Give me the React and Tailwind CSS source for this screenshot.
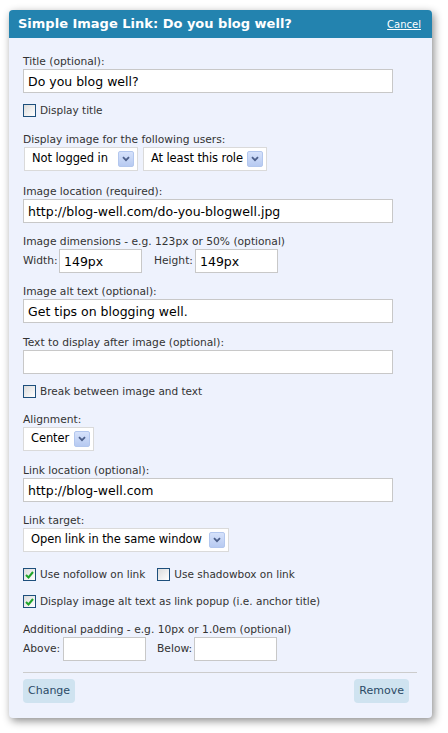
import React from 'react';

const font = { fontFamily: '"DejaVu Sans", Verdana, sans-serif' };

function Label({ children, className = '' }) {
  return <div className={`h-[14px] whitespace-nowrap text-[10.7px] leading-[14px] text-[#333] ${className}`}>{children}</div>;
}

function TextInput({ value = '', className = 'w-[370px]' }) {
  return (
    <input
      readOnly
      defaultValue={value}
      className={`block h-6 border border-[#c8c8c8] bg-white px-[4px] text-[12.5px] text-black outline-none ${className}`}
      style={font}
    />
  );
}

function Arrow() {
  return (
    <span className="ml-[2px] grid h-[16px] w-[16px] shrink-0 place-items-center rounded-[2px] border border-[#b3c7ee] bg-gradient-to-b from-[#d6e2fb] to-[#b7caf1]">
      <svg width="8" height="6" viewBox="0 0 8 6">
        <path d="M1 1.2 L4 4.2 L7 1.2" fill="none" stroke="#4c5f8a" strokeWidth="1.8" />
      </svg>
    </span>
  );
}

function Select({ value, className = '' }) {
  return (
    <div className={`flex h-6 items-center border border-[#dadada] bg-white pl-[7px] pr-[3px] text-[11.5px] tracking-[-0.1px] text-black ${className}`}>
      <span className="flex-1 whitespace-nowrap">{value}</span>
      <Arrow />
    </div>
  );
}

function Checkbox({ checked, label }) {
  return (
    <div className="flex h-[13px] items-center gap-[4px] text-[10.5px] leading-[13px] text-[#333]">
      <span className="grid h-[13px] w-[13px] shrink-0 place-items-center border border-[#1d4f7c] bg-gradient-to-br from-[#dcdcdc] to-white">
        {checked && (
          <svg width="9" height="8" viewBox="0 0 9 8">
            <path d="M1 4 L3.5 6.5 L8 1" fill="none" stroke="#1fa52a" strokeWidth="2" />
          </svg>
        )}
      </span>
      <span className="whitespace-nowrap">{label}</span>
    </div>
  );
}

function Button({ children }) {
  return (
    <button className="h-6 rounded-[4px] bg-[#cfe3f0] px-[5px] text-[11px] text-[#2b4a66]" style={font}>
      {children}
    </button>
  );
}

export default function App() {
  return (
    <div className="min-h-screen bg-white pt-[10px] pl-[9px]" style={font}>
      <div className="w-[423px] rounded-[4px] bg-[#eef2fd] shadow-[2px_3px_9px_rgba(0,0,0,0.45)]">
        <div className="flex h-[28px] items-center justify-between rounded-t-[4px] bg-[#2383af] pl-[9px] pr-[11px] text-white">
          <span className="text-[13px] font-bold">Simple Image Link: Do you blog well?</span>
          <span className="text-[10px] underline">Cancel</span>
        </div>

        <div className="pt-[17px] pr-[15px] pb-[15px] pl-[14px]">
          <Label>Title (optional):</Label>
          <TextInput value="Do you blog well?" />

          <div className="mt-[11px]">
            <Checkbox label="Display title" />
          </div>

          <Label className="mt-[16px]">Display image for the following users:</Label>
          <div className="flex gap-[5px] pl-[1px]">
            <Select value="Not logged in" className="w-[114px]" />
            <Select value="At least this role" className="w-[124px]" />
          </div>

          <Label className="mt-[14px]">Image location (required):</Label>
          <TextInput value="http://blog-well.com/do-you-blogwell.jpg" />

          <Label className="mt-[12px]">Image dimensions - e.g. 123px or 50% (optional)</Label>
          <div className="flex items-center text-[10.7px] text-[#333]">
            <span className="w-[36px]">Width:</span>
            <TextInput value="149px" className="w-[83px]" />
            <span className="ml-[12px] w-[41px]">Height:</span>
            <TextInput value="149px" className="w-[83px]" />
          </div>

          <Label className="mt-[12px]">Image alt text (optional):</Label>
          <TextInput value="Get tips on blogging well." />

          <Label className="mt-[13px]">Text to display after image (optional):</Label>
          <TextInput />

          <div className="mt-[11px]">
            <Checkbox label="Break between image and text" />
          </div>

          <Label className="mt-[15px]">Alignment:</Label>
          <Select value="Center" className="w-[71px]" />

          <Label className="mt-[13px]">Link location (optional):</Label>
          <TextInput value="http://blog-well.com" />

          <Label className="mt-[12px]">Link target:</Label>
          <Select value="Open link in the same window" className="w-[206px]" />

          <div className="mt-[16px] flex gap-[12px]">
            <Checkbox checked label="Use nofollow on link" />
            <Checkbox label="Use shadowbox on link" />
          </div>

          <div className="mt-[14px]">
            <Checkbox checked label="Display image alt text as link popup (i.e. anchor title)" />
          </div>

          <Label className="mt-[15px]">Additional padding - e.g. 10px or 1.0em (optional)</Label>
          <div className="flex items-center text-[10.7px] text-[#333]">
            <span className="w-[40px]">Above:</span>
            <TextInput className="w-[83px]" />
            <span className="ml-[11px] w-[37px]">Below:</span>
            <TextInput className="w-[83px]" />
          </div>

          <div className="mt-[11px] h-px bg-[#cccccc]" />

          <div className="mt-[6px] flex justify-between pr-[8px]">
            <Button>Change</Button>
            <Button>Remove</Button>
          </div>
        </div>
      </div>
    </div>
  );
}
